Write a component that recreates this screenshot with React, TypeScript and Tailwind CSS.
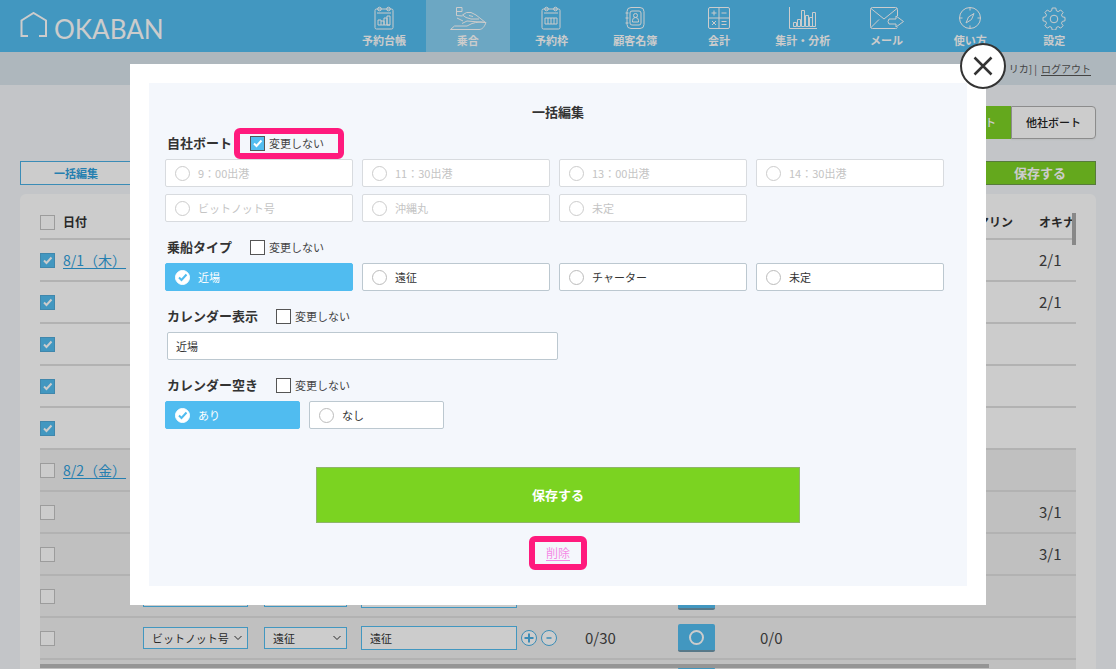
import { useState } from "react";
import type { ReactNode } from "react";

type NavItem = { label: string; icon: ReactNode };

// Menu icons, drawn as thin white outlines
const CalendarTop = () => (
  <>
    <rect x="1" y="3" width="18" height="20" rx="1.5" />
    <path d="M3 7h14" />
    <circle cx="5.5" cy="3" r="1.8" />
    <circle cx="14.5" cy="3" r="1.8" />
  </>
);

const navItems: NavItem[] = [
  {
    label: "予約台帳",
    icon: (
      <svg viewBox="0 0 20 24" className="h-6 w-5">
        <CalendarTop />
        <path d="M4 19v-5h3v5M7 15h3v4M10 19v-7h3v7M13 19v-9h3v9zM4 19h12" />
      </svg>
    ),
  },
  {
    label: "乗合",
    icon: (
      <svg viewBox="0 0 38 24" className="h-6 w-[38px]">
        <path d="M1.500 23.500H30c3.500 0 5.500-3 7-7-5-1-9-.5-14 1l-5 2.500H5.500z" />
        <path d="M13 17.500l5-2.500 18.500 1.500L27 9l-5-2.500h-4.500l-4 2.500 3.500 2.500 5 1.500h8" />
        <path d="M7.500 9.500v-8h5.500v4H7.500M7.500 9.500l6 .5M8 12l6 3M20 9.500l4 1" />
      </svg>
    ),
  },
  {
    label: "予約枠",
    icon: (
      <svg viewBox="0 0 20 24" className="h-6 w-5">
        <CalendarTop />
        <path d="M4 12h12v6H4zM7 12v6M10 12v6M13 12v6" />
      </svg>
    ),
  },
  {
    label: "顧客名簿",
    icon: (
      <svg viewBox="0 0 20 24" className="h-6 w-5">
        <rect x="2" y="1.500" width="17" height="21" rx="4" />
        <rect x="5" y="5" width="11" height="14" rx="2" />
        <circle cx="10.500" cy="9.500" r="2" />
        <path d="M7.500 16v-1.500a3 3 0 0 1 6 0V16zM.5 7h3M.5 12h3M.5 17h3" />
      </svg>
    ),
  },
  {
    label: "会計",
    icon: (
      <svg viewBox="0 0 22 24" className="h-6 w-[22px]">
        <rect x=".5" y="1.500" width="21" height="21" rx="1.500" />
        <path d="M11 1.500v21M.5 12h21M3.500 7h5M6 4.500v5M13.500 7h5M4 15l4 4M8 15l-4 4M13.500 15.500h5M13.500 18.500h5" />
      </svg>
    ),
  },
  {
    label: "集計・分析",
    icon: (
      <svg viewBox="0 0 30 24" className="h-6 w-[30px]">
        <path d="M1.500 1v21.500H29" />
        <path d="M5.500 20.500v-4h3v4zM9.500 20.500v-7h3v7zM13.500 20.500v-16h3v16zM17.500 20.500v-11h3v11zM21.500 20.500v-9h3v9zM24.500 20.500v-14h3v14z" />
      </svg>
    ),
  },
  {
    label: "メール",
    icon: (
      <svg viewBox="0 0 36 24" className="h-6 w-9">
        <path d="M28.500 10V3.500a2 2 0 0 0-2-2h-23a2 2 0 0 0-2 2v17a2 2 0 0 0 2 2h23a2 2 0 0 0 2-1" />
        <path d="M2 2.500L15 13 28 2.500M2 21.500l8-8" />
        <path d="M20 13h7v-3l7.500 5.500L27 21v-3h-7l-1-2.500z" />
      </svg>
    ),
  },
  {
    label: "使い方",
    icon: (
      <svg viewBox="0 0 24 24" className="h-6 w-6">
        <circle cx="12" cy="12" r="10.500" />
        <path d="M16 7.500l-2.500 6L8 17l2.500-6zM12 1.500v3M12 19.500v3M1.500 12h3M19.500 12h3" />
      </svg>
    ),
  },
  {
    label: "設定",
    icon: (
      <svg viewBox="0 0 24 24" className="h-6 w-6">
        <path d="M10.200 2h3.600l.6 2.800 1.800.8 2.500-1.600 2.400 2.500-1.600 2.400.8 1.900 2.700.6v3.400l-2.700.6-.8 1.900 1.600 2.400-2.400 2.400-2.500-1.500-1.800.8-.6 2.600h-3.600l-.6-2.600-1.800-.8-2.500 1.500-2.400-2.400 1.600-2.400-.8-1.900L1 14.800v-3.400l2.700-.6.8-1.900-1.600-2.400L5.300 4l2.500 1.600 1.800-.8z" />
        <circle cx="12" cy="13" r="3.800" />
      </svg>
    ),
  },
];

type Row = {
  date?: string;
  checked?: boolean;
  gray?: boolean;
  form?: boolean;
  okinawa?: string;
};

const rows: Row[] = [
  { date: "8/1（木）", checked: true, okinawa: "2/1" },
  { checked: true, okinawa: "2/1" },
  { checked: true },
  { checked: true },
  { checked: true },
  { date: "8/2（金）", gray: true },
  { gray: true, okinawa: "3/1" },
  { gray: true, okinawa: "3/1" },
  { gray: true, form: true },
  { gray: true, form: true },
];

const ports = ["9：00出港", "11：30出港", "13：00出港", "14：30出港", "ビットノット号", "沖縄丸", "未定"];
const boardingTypes = ["近場", "遠征", "チャーター", "未定"];

function TableCheck({ label, defaultChecked }: { label: string; defaultChecked?: boolean }) {
  return (
    <span className="grid size-[15px]">
      <input
        type="checkbox"
        aria-label={label}
        defaultChecked={defaultChecked}
        className="peer [grid-area:1/1] size-[15px] appearance-none border border-[#c4c4c4] bg-white checked:border-[#50a9d8] checked:bg-[#53bdf0]"
      />
      <svg
        viewBox="0 0 15 15"
        className="pointer-events-none invisible [grid-area:1/1] size-[15px] fill-none stroke-white stroke-2 peer-checked:visible"
      >
        <path d="M4 7.500l2.500 2.500L11.500 4.500" />
      </svg>
    </span>
  );
}

function KeepCheck({ checked, onChange }: { checked: boolean; onChange: (value: boolean) => void }) {
  return (
    <label className="flex items-center gap-1 text-[11px] text-[#444]">
      <span className="grid size-[15px]">
        <input
          type="checkbox"
          checked={checked}
          onChange={(e) => onChange(e.target.checked)}
          className="peer [grid-area:1/1] size-[15px] appearance-none border border-[#555] bg-white checked:bg-[#53bdf0]"
        />
        <svg
          viewBox="0 0 15 15"
          className="pointer-events-none invisible [grid-area:1/1] size-[15px] fill-none stroke-white stroke-2 peer-checked:visible"
        >
          <path d="M4 7.500l2.500 2.500L11.500 4.500" />
        </svg>
      </span>
      変更しない
    </label>
  );
}

function Option({
  name,
  label,
  defaultChecked,
  disabled,
}: {
  name: string;
  label: string;
  defaultChecked?: boolean;
  disabled?: boolean;
}) {
  return (
    <label className="flex h-7 items-center gap-2 rounded-xs border border-[#bcc8d0] bg-white px-[9px] text-[11px] text-[#333] has-checked:border-[#50bcf0] has-checked:bg-[#50bcf0] has-checked:text-white has-disabled:border-[#d8dbdf] has-disabled:text-[#c4c4c4]">
      <span className="grid size-[15px]">
        <input
          type="radio"
          name={name}
          defaultChecked={defaultChecked}
          disabled={disabled}
          className="peer [grid-area:1/1] size-[15px] appearance-none rounded-full border border-[#bbb] bg-white checked:border-white disabled:border-[#ccc]"
        />
        <svg
          viewBox="0 0 15 15"
          className="pointer-events-none invisible [grid-area:1/1] size-[15px] fill-none stroke-[#50bcf0] stroke-2 peer-checked:visible"
        >
          <path d="M4 7.500l2.500 2.500L11.500 4.500" />
        </svg>
      </span>
      {label}
    </label>
  );
}

function CellSelect({ label, value }: { label: string; value: string }) {
  return (
    <span className="grid h-[22px] items-center">
      <select
        aria-label={label}
        defaultValue={value}
        className="[grid-area:1/1] h-[22px] w-full appearance-none border border-[#53bdf0] bg-white pl-2 text-[11px] leading-none text-[#333]"
      >
        <option>{value}</option>
      </select>
      <svg
        viewBox="0 0 8 6"
        className="pointer-events-none mr-[6px] [grid-area:1/1] h-[6px] w-2 justify-self-end fill-none stroke-[#333]"
      >
        <path d="M.5 1L4 4.500 7.500 1" />
      </svg>
    </span>
  );
}

function RoundButton({ label, plus }: { label: string; plus?: boolean }) {
  return (
    <button type="button" aria-label={label} className="shrink-0">
      <svg viewBox="0 0 16 16" className="size-4 fill-white stroke-[#4ab0e4]">
        <circle cx="8" cy="8" r="7.500" />
        {plus ? <path strokeWidth="2" d="M3.500 8h9M8 3.500v9" /> : <path strokeWidth="1.500" d="M5.500 8h5" />}
      </svg>
    </button>
  );
}

function OpenButton() {
  return (
    <button
      type="button"
      aria-label="空きあり"
      className="flex h-7 w-[37px] items-center justify-center rounded-xs border-b-2 border-[#6f97ab] bg-[#53bdf0]"
    >
      <span className="size-[15px] rounded-full border-2 border-white" />
    </button>
  );
}

function Header() {
  return (
    <header className="flex h-[52px] shrink-0 items-stretch justify-between bg-[#53bdf0] px-5 text-white">
      <a href="#" className="flex items-center gap-[6px] text-[26px] leading-none font-normal font-['Lato',sans-serif]">
        <svg viewBox="0 0 28 28" className="size-7 fill-none stroke-white stroke-2">
          <path d="M8 24H1.500V8.500L13.500 1 26 8.500V24h-7" />
        </svg>
        <span className="pt-[5px]">OKABAN</span>
      </a>
      <nav className="flex w-[754px]">
        {navItems.map((item) => (
          <a
            key={item.label}
            href="#"
            className={`flex flex-1 flex-col items-center gap-px pt-[6px] text-[11px] leading-[18px] font-bold whitespace-nowrap [&_svg]:fill-none [&_svg]:stroke-white ${
              item.label === "乗合" ? "bg-white/30" : ""
            }`}
          >
            {item.icon}
            {item.label}
          </a>
        ))}
      </nav>
    </header>
  );
}

function ScheduleTable() {
  return (
    <table className="w-full table-fixed border-collapse text-[15px] text-[#444]">
      <colgroup>
        <col className="w-[103px]" />
        <col className="w-[121px]" />
        <col className="w-[97px]" />
        <col className="w-[224px]" />
        <col className="w-[93px]" />
        <col className="w-[82px]" />
        <col />
        <col className="w-[62px]" />
        <col className="w-[37px]" />
      </colgroup>
      <thead>
        <tr className="h-[33px] border-b-2 border-[#dfdfdf] text-left text-xs whitespace-nowrap text-[#333]">
          <th>
            <label className="flex items-center gap-2">
              <TableCheck label="すべて選択" />
              日付
            </label>
          </th>
          <td colSpan={6} />
          <th>マリン</th>
          <th>オキナワ</th>
        </tr>
      </thead>
      <tbody>
        {rows.map((row, i) => (
          <tr key={i} className={`h-[42px] border-b-2 border-[#dfdfdf] ${row.gray ? "bg-[#f1f1f1]" : ""}`}>
            <td>
              <div className="flex items-center gap-2 text-sm whitespace-nowrap">
                <TableCheck label={`${i + 1}行目を選択`} defaultChecked={row.checked} />
                {row.date && (
                  <a href="#" className="text-[#2f9fdc] underline underline-offset-2">
                    {row.date}
                  </a>
                )}
              </div>
            </td>
            {row.form ? (
              <>
                <td className="pr-4">
                  <CellSelect label="ボート" value="ビットノット号" />
                </td>
                <td className="pr-[14px]">
                  <CellSelect label="乗船タイプ" value="遠征" />
                </td>
                <td>
                  <div className="flex items-center gap-1">
                    <input
                      type="text"
                      aria-label="カレンダー表示"
                      defaultValue="遠征"
                      className="h-6 w-[156px] border border-[#53bdf0] bg-white px-2 text-[11px] text-[#333]"
                    />
                    <RoundButton label="追加" plus />
                    <RoundButton label="削除" />
                  </div>
                </td>
                <td>0/30</td>
                <td>
                  <OpenButton />
                </td>
                <td>0/0</td>
              </>
            ) : (
              <td colSpan={6} />
            )}
            <td />
            <td>{row.okinawa}</td>
          </tr>
        ))}
        <tr className="h-[42px] bg-[#f1f1f1]">
          <td colSpan={5} />
          <td>
            <OpenButton />
          </td>
          <td colSpan={3} />
        </tr>
      </tbody>
    </table>
  );
}

function BulkEditModal({ onClose }: { onClose: () => void }) {
  const [keepPort, setKeepPort] = useState(true);
  const [keepType, setKeepType] = useState(false);
  const [keepText, setKeepText] = useState(false);
  const [keepOpen, setKeepOpen] = useState(false);

  return (
    <div className="fixed inset-0 overflow-hidden bg-black/20">
      <div role="dialog" aria-labelledby="bulk-title" className="relative mx-auto mt-16 w-[856px] max-w-full bg-white p-[19px]">
        <button
          type="button"
          aria-label="閉じる"
          onClick={onClose}
          className="absolute -top-[21px] -right-5 flex size-[46px] items-center justify-center rounded-full border-2 border-[#333] bg-white"
        >
          <svg viewBox="0 0 20 20" className="size-5 fill-none stroke-[#333] stroke-[2.5]">
            <path d="M1.500 1.500l17 17M18.500 1.500l-17 17" />
          </svg>
        </button>

        <form className="bg-[#f4f7fc] px-4 pt-[19px] pb-4 text-[#333]" onSubmit={(e) => e.preventDefault()}>
          <h2 id="bulk-title" className="mb-[9px] text-center text-[13px] leading-5 font-bold">
            一括編集
          </h2>

          <div className="mr-[7px] flex flex-col gap-[13px]">
            <section>
              <div className="mb-1 flex h-6 items-center gap-[18px] pl-[2px]">
                <h3 className="text-[13px] font-bold">自社ボート</h3>
                <div className="relative">
                  <KeepCheck checked={keepPort} onChange={setKeepPort} />
                  <div className="pointer-events-none absolute -top-[7px] -right-5 -bottom-2 -left-4 rounded-md border-6 border-[#ff1a7d]" />
                </div>
              </div>
              <div className="grid grid-cols-4 gap-x-[9px] gap-y-[7px]">
                {ports.map((port) => (
                  <Option key={port} name="port" label={port} disabled={keepPort} />
                ))}
              </div>
            </section>

            <section>
              <div className="mb-1 flex h-6 items-center gap-[18px] pl-[2px]">
                <h3 className="text-[13px] font-bold">乗船タイプ</h3>
                <KeepCheck checked={keepType} onChange={setKeepType} />
              </div>
              <div className="grid grid-cols-4 gap-x-[9px]">
                {boardingTypes.map((type) => (
                  <Option key={type} name="type" label={type} defaultChecked={type === "近場"} disabled={keepType} />
                ))}
              </div>
            </section>

            <section>
              <div className="mb-1 flex h-6 items-center gap-[18px] pl-[2px]">
                <h3 className="text-[13px] font-bold">カレンダー表示</h3>
                <KeepCheck checked={keepText} onChange={setKeepText} />
              </div>
              <input
                type="text"
                aria-label="カレンダー表示"
                defaultValue="近場"
                disabled={keepText}
                className="ml-[2px] block h-7 w-[391px] rounded-xs border border-[#bcc8d0] bg-white px-2 text-[11px]"
              />
            </section>

            <section>
              <div className="mb-1 flex h-6 items-center gap-[18px] pl-[2px]">
                <h3 className="text-[13px] font-bold">カレンダー空き</h3>
                <KeepCheck checked={keepOpen} onChange={setKeepOpen} />
              </div>
              <div className="grid grid-cols-[135px_135px] gap-x-[9px]">
                <Option name="open" label="あり" defaultChecked disabled={keepOpen} />
                <Option name="open" label="なし" disabled={keepOpen} />
              </div>
            </section>
          </div>

          <div className="mt-[38px] flex flex-col items-center gap-[13px]">
            <button type="submit" className="h-14 w-[484px] border border-[#8fb56a] bg-[#7bd321] text-[13px] font-bold text-white">
              保存する
            </button>
            <div className="flex h-[34px] w-[58px] items-center justify-center rounded-md border-6 border-[#ff1a7d]">
              <a href="#" className="text-xs leading-none text-[#f58ae6] underline underline-offset-2">
                削除
              </a>
            </div>
          </div>
        </form>
      </div>
    </div>
  );
}

export default function App() {
  const [open, setOpen] = useState(true);

  return (
    <div className="flex h-screen flex-col overflow-hidden bg-[#f4f7fa] font-['Noto_Sans_CJK_JP',sans-serif]">
      <Header />

      <div className="flex h-[33px] shrink-0 items-center justify-end gap-1 bg-[#dae5ed] px-[25px] text-[10px] text-[#555]">
        <span>リカ] |</span>
        <a href="#" className="underline underline-offset-2">
          ログアウト
        </a>
      </div>

      <main className="flex min-h-0 flex-1 flex-col px-5 pt-[21px]">
        <div className="flex h-[33px] shrink-0 justify-end text-[11px] font-medium">
          <button type="button" className="w-[85px] rounded-l-sm bg-[#7dd225] text-white">
            自社ボート
          </button>
          <button type="button" className="w-[85px] rounded-r-sm border border-[#b0b0b0] bg-white text-[#222] shadow-xs">
            他社ボート
          </button>
        </div>

        <div className="mt-[22px] flex h-6 shrink-0 justify-between font-bold">
          <button
            type="button"
            onClick={() => setOpen(true)}
            className="w-[112px] border border-[#4ab0e4] bg-white text-[11px] text-[#2f9fdc]"
          >
            一括編集
          </button>
          <button type="button" className="w-[112px] border border-[#6d9a4a] bg-[#7dd225] text-[13px] text-white">
            保存する
          </button>
        </div>

        <div className="relative mt-[9px] min-h-0 flex-1 overflow-hidden rounded-t-md bg-white px-5 pt-3">
          <div className="h-full overflow-hidden">
            <ScheduleTable />
          </div>
          {/* scroll bars of the table area */}
          <div className="absolute top-[19px] right-5 h-8 w-1 bg-[#aaa]" />
          <div className="absolute bottom-px left-5 h-1 w-[949px] bg-[#bbb]" />
        </div>
      </main>

      {open && <BulkEditModal onClose={() => setOpen(false)} />}
    </div>
  );
}
